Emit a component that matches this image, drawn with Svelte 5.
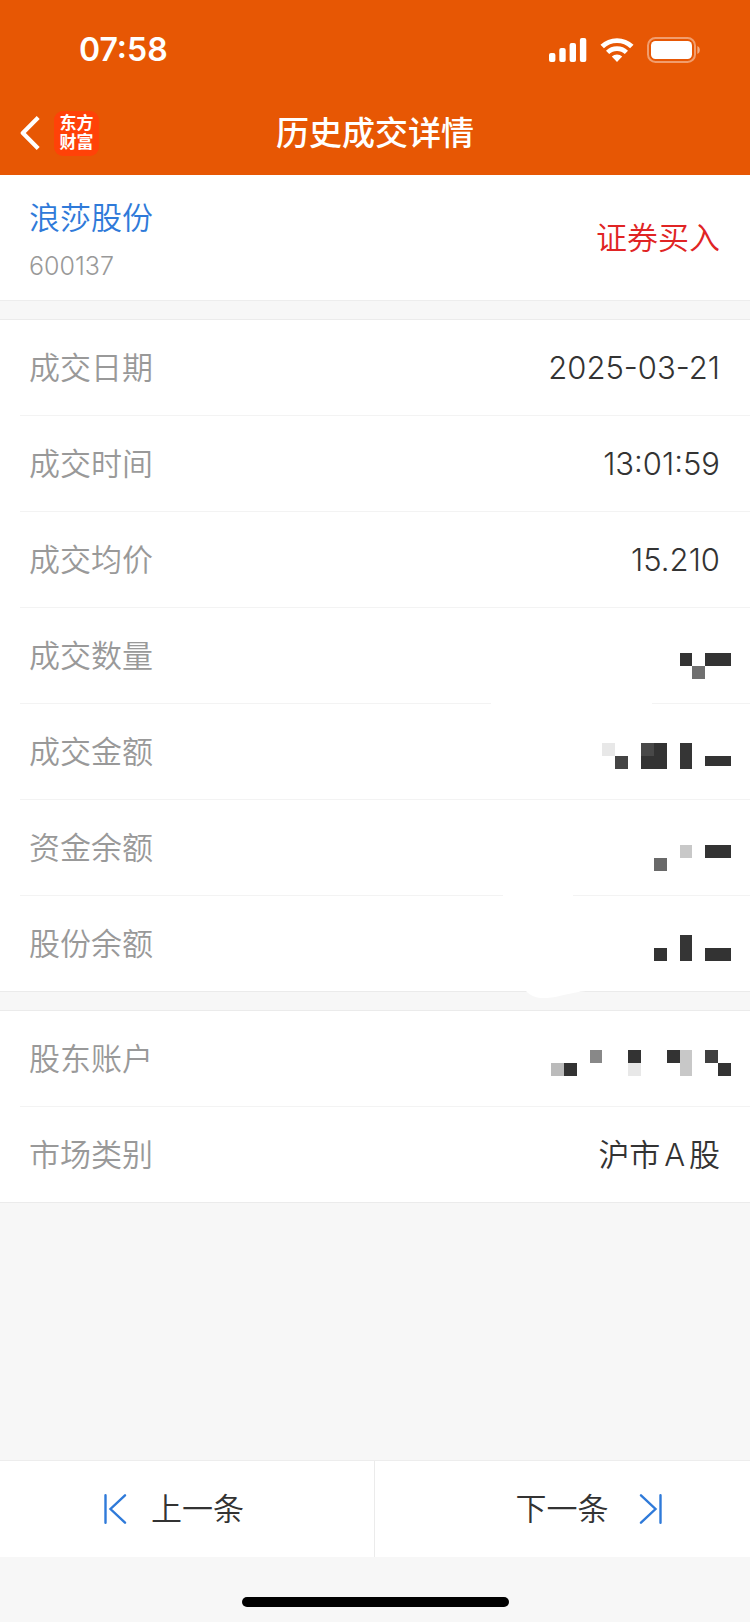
<script>
    let security = { name: '浪莎股份', code: '600137', side: '证券买入' };

    // masked values are drawn as a mosaic: [column, row, width, height, colour]
    let deal = [
        { label: '成交日期', value: '2025-03-21' },
        { label: '成交时间', value: '13:01:59' },
        { label: '成交均价', value: '15.210' },
        {
            label: '成交数量',
            top: 45,
            cells: [[10, 0, 1, 1, '#333'], [12, 0, 2, 1, '#333'], [11, 1, 1, 1, '#707070']],
            wipe: 'wide'
        },
        {
            label: '成交金额',
            top: 39,
            cells: [
                [4, 0, 1, 1, '#e8e8e8'],
                [5, 1, 1, 1, '#444'],
                [7, 0, 2, 2, '#333'],
                [7, 0, 1, 1, '#484848'],
                [10, 0, 1, 2, '#353535'],
                [12, 1, 2, 0.8, '#333']
            ]
        },
        {
            label: '资金余额',
            top: 45,
            cells: [[8, 1, 1, 1, '#696969'], [10, 0, 1, 1, '#c8c8c8'], [12, 0, 2, 1, '#333']],
            wipe: 'narrow'
        },
        {
            label: '股份余额',
            top: 39,
            cells: [[8, 1, 1, 1, '#333'], [10, 0, 1, 2, '#353535'], [12, 1, 2, 1, '#333']],
            wipe: 'curve'
        }
    ];

    let account = [
        {
            label: '股东账户',
            top: 39,
            cells: [
                [0, 1, 1, 1, '#bbb'],
                [1, 1, 1, 1, '#333'],
                [3, 0, 1, 1, '#888'],
                [6, 0, 1, 1, '#333'],
                [6, 1, 1, 1, '#e8e8e8'],
                [9, 0, 1, 1, '#333'],
                [10, 0, 1, 2, '#c8c8c8'],
                [12, 0, 1, 1, '#404040'],
                [13, 1, 1, 1, '#333']
            ]
        },
        { label: '市场类别', value: '沪市A股' }
    ];

    let groups = [deal, account];
    const cell = 180 / 14;
</script>

<div class="page">
    <header>
        <div class="status">
            <span class="time">07:58</span>
            <div class="status-icons">
                <svg width="38" height="24" viewBox="0 0 38 24" fill="#fff">
                    <rect x="0" y="15" width="6.4" height="9" rx="2" />
                    <rect x="10.3" y="10" width="6.4" height="14" rx="2" />
                    <rect x="20.6" y="5" width="6.4" height="19" rx="2" />
                    <rect x="30.9" y="0" width="6.4" height="24" rx="2" />
                </svg>
                <svg width="34" height="24" viewBox="0 0 34 24">
                    <path d="M2.2 8.6a21.2 21.2 0 0 1 29.6 0" fill="none" stroke="#fff" stroke-width="4.9" />
                    <path d="M7.6 14.4a13.6 13.6 0 0 1 18.8 0" fill="none" stroke="#fff" stroke-width="4.6" />
                    <path d="M17 24l-5.2-5.4a7.6 7.6 0 0 1 10.4 0z" fill="#fff" />
                </svg>
                <svg width="54" height="26" viewBox="0 0 54 26">
                    <rect x="1" y="1" width="47" height="24" rx="7.5" fill="none" stroke="#fff" stroke-opacity=".42" stroke-width="2" />
                    <rect x="4" y="4" width="41" height="18" rx="4.5" fill="#fff" />
                    <path d="M50.4 9c3.2 1.3 3.2 6.7 0 8z" fill="#fff" fill-opacity=".5" />
                </svg>
            </div>
        </div>
        <div class="nav">
            <div class="nav-left">
                <button class="back" aria-label="返回">
                    <svg width="20" height="34" viewBox="0 0 20 34" fill="none" stroke="#fff" stroke-width="4.2">
                        <path d="M18.2 1.6 2.8 17l15.400 15.400" stroke-linejoin="round" />
                    </svg>
                </button>
                <div class="logo"><span>东方</span><span>财富</span></div>
            </div>
            <h1>历史成交详情</h1>
        </div>
    </header>

    <main>
        <section class="security">
            <div>
                <a class="name" href="#quote">{security.name}</a>
                <div class="code">{security.code}</div>
            </div>
            <span class="side">{security.side}</span>
        </section>

        {#each groups as rows}
            <dl class="group">
                {#each rows as row}
                    <div class="row">
                        <dt>{row.label}</dt>
                        {#if row.cells}
                            <dd class="masked">
                                <svg width="180" height="95" viewBox="0 0 180 95" shape-rendering="crispEdges">
                                    {#each row.cells as [x, y, w, h, fill]}
                                        <rect x={x * cell} y={row.top + y * cell} width={w * cell} height={h * cell} {fill} />
                                    {/each}
                                </svg>
                            </dd>
                        {:else}
                            <dd>{row.value}</dd>
                        {/if}
                        {#if row.wipe === 'curve'}
                            <svg class="wipe curve" width="60" height="8" viewBox="0 0 60 8">
                                <path d="M0 0h60C46 1 34 6 21 7 13 7.5 5 6 0 0z" fill="#fff" />
                            </svg>
                        {:else if row.wipe}
                            <span class="wipe {row.wipe}"></span>
                        {/if}
                    </div>
                {/each}
            </dl>
        {/each}
    </main>

    <footer>
        <button class="prev">
            <svg width="23" height="30" viewBox="0 0 23 30" fill="none" stroke="#2f7ad9" stroke-width="2.4" stroke-linecap="round">
                <path d="M1.5 1.3v27.4M21 1.3 6.5 15 21 28.7" />
            </svg>
            上一条
        </button>
        <button class="next">
            下一条
            <svg width="23" height="30" viewBox="0 0 23 30" fill="none" stroke="#2f7ad9" stroke-width="2.4" stroke-linecap="round">
                <path d="M21.5 1.3v27.4M2 1.3 16.5 15 2 28.7" />
            </svg>
        </button>
    </footer>
    <div class="home"><span></span></div>
</div>

<style>
    :global(body) {
        margin: 0;
        background: #f7f7f7;
    }
    .page {
        display: flex;
        flex-direction: column;
        min-height: 100vh;
        font-family: Inter, "Noto Sans CJK SC", sans-serif;
        font-size: 31px;
        font-weight: 350;
        line-height: 40px;
        color: #333;
    }
    button {
        padding: 0;
        border: none;
        background: none;
        font: inherit;
        color: inherit;
        cursor: pointer;
    }
    svg {
        display: block;
    }

    header {
        padding-bottom: 9px;
        background: #e75704;
        color: #fff;
    }
    .status {
        display: flex;
        align-items: center;
        justify-content: space-between;
        height: 100px;
        padding: 0 49px 0 79px;
    }
    .time {
        font-size: 32px;
        font-weight: 600;
    }
    .status-icons {
        display: flex;
        align-items: center;
        gap: 13px;
    }
    .nav {
        display: grid;
        grid-template-columns: 1fr auto 1fr;
        align-items: center;
        height: 66px;
        padding: 0 20px;
    }
    .nav-left {
        display: flex;
        align-items: center;
        gap: 14px;
    }
    .logo {
        display: flex;
        flex-direction: column;
        align-items: center;
        justify-content: center;
        width: 45px;
        height: 45px;
        border-radius: 9px;
        background: #ff4208;
        font-size: 17px;
        font-weight: 700;
        line-height: 19px;
    }
    h1 {
        margin: 0;
        font-size: 33px;
        font-weight: 500;
    }

    .security {
        display: flex;
        align-items: center;
        justify-content: space-between;
        height: 125px;
        padding: 0 30px 0 29px;
        border-bottom: 1px solid #ededed;
        background: #fff;
    }
    .name {
        display: block;
        padding-top: 8px;
        color: #2f7ad9;
        text-decoration: none;
    }
    .code {
        margin-top: 8px;
        font-size: 25px;
        color: #999;
    }
    .side {
        color: #e02424;
    }

    .group {
        margin: 18px 0 0;
        border-top: 1px solid #ebebeb;
        background: #fff;
    }
    .row {
        position: relative;
        display: flex;
        align-items: center;
        justify-content: space-between;
        height: 95px;
        margin-left: 20px;
        padding: 0 30px 0 9px;
        border-bottom: 1px solid #f3f3f3;
    }
    .row:last-child {
        margin-left: 0;
        padding-left: 29px;
        border-color: #ebebeb;
    }
    dt {
        color: #999;
    }
    dd {
        margin: 0;
        text-autospace: normal;
    }
    .masked {
        margin-right: -11px;
    }
    /* parts of the divider that were rubbed out together with the value */
    .wipe {
        position: absolute;
        top: 100%;
        height: 1px;
        background: #fff;
    }
    .wide {
        right: 98px;
        width: 161px;
    }
    .narrow {
        right: 177px;
        width: 70px;
    }
    .curve {
        right: 164px;
        height: 8px;
        background: none;
    }

    footer {
        display: grid;
        grid-template-columns: 1fr 1fr;
        margin-top: auto;
        border-top: 1px solid #ededed;
        background: #fff;
    }
    footer button {
        display: flex;
        align-items: center;
        justify-content: center;
        height: 96px;
    }
    .prev {
        gap: 24px;
        padding-right: 26px;
        border-right: 1px solid #ebebeb;
    }
    .next {
        gap: 30px;
        padding-left: 52px;
    }
    .home {
        display: flex;
        justify-content: center;
        padding: 40px 0 15px;
    }
    .home span {
        width: 267px;
        height: 10px;
        border-radius: 5px;
        background: #000;
    }
</style>
